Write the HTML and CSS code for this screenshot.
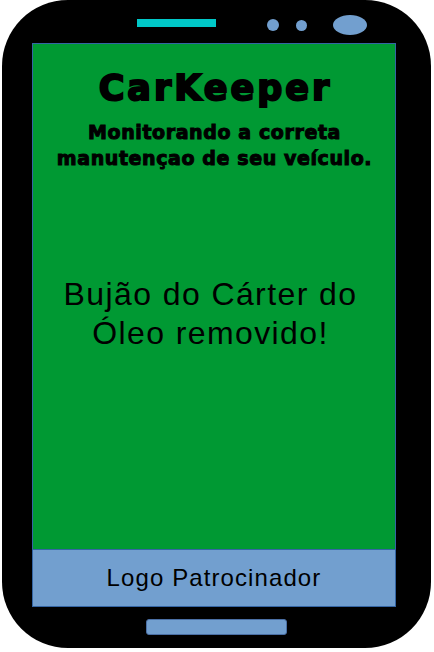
FILE: index.html
```html
<!DOCTYPE html>
<html lang="pt">
<head>
<meta charset="utf-8">
<link rel="stylesheet" href="styles.css">
</head>
<body>
<div class="phone">
  <div class="bezel-top">
    <span class="speaker"></span>
    <span class="dot dot-1"></span>
    <span class="dot dot-2"></span>
    <span class="camera"></span>
  </div>
  <div class="screen">
    <div class="content">
      <h1 class="title">CarKeeper</h1>
      <p class="subtitle">Monitorando a correta<br>manutençao de seu veículo.</p>
      <p class="message">Bujão do Cárter do<br>Óleo removido!</p>
    </div>
    <div class="sponsor">Logo Patrocinador</div>
  </div>
  <div class="bezel-bottom">
    <span class="home"></span>
  </div>
</div>
</body>
</html>
```
FILE: styles.css
```css
html, body {
  margin: 0;
  padding: 0;
  background: #ffffff;
}
body {
  width: 434px;
  height: 652px;
  overflow: hidden;
}
.phone {
  margin-left: 2px;
  width: 429px;
  height: 648px;
  background: #000;
  border-radius: 66px;
  display: flex;
  flex-direction: column;
}
.bezel-top {
  height: 43px;
  display: flex;
  align-items: flex-start;
  padding-left: 135px;
  box-sizing: border-box;
}
.speaker {
  margin-top: 19px;
  width: 79px;
  height: 8px;
  background: #00c8c8;
}
.dot {
  margin-top: 19px;
  border-radius: 50%;
  background: #729fcf;
}
.dot-1 {
  width: 12px;
  height: 12px;
  margin-left: 51px;
}
.dot-2 {
  width: 11px;
  height: 11px;
  margin-left: 17px;
  margin-top: 20px;
}
.camera {
  margin-top: 15px;
  margin-left: 26px;
  width: 34px;
  height: 20px;
  border-radius: 50%;
  background: #729fcf;
}
.screen {
  margin-left: 30px;
  width: 364px;
  height: 564px;
  box-sizing: border-box;
  border: 1px solid #3465a4;
  display: flex;
  flex-direction: column;
}
.content {
  flex: 1;
  background: #009933;
  text-align: center;
  color: #000;
}
.title {
  margin: 24px 0 0;
  padding-left: 3px;
  font-family: "DejaVu Sans", sans-serif;
  font-weight: bold;
  font-size: 35px;
  line-height: 40px;
  letter-spacing: 3px;
  -webkit-text-stroke: 2px #000;
}
.subtitle {
  margin: 11px 0 0;
  padding-left: 1px;
  font-family: "DejaVu Sans", sans-serif;
  font-weight: bold;
  font-size: 19px;
  line-height: 26px;
  letter-spacing: 0.6px;
  -webkit-text-stroke: 1px #000;
}
.message {
  margin: 104px 0 0;
  padding-right: 7px;
  font-family: "Liberation Sans", Arial, sans-serif;
  font-size: 32px;
  line-height: 39px;
  letter-spacing: 1.4px;
}
.sponsor {
  height: 56px;
  border-top: 1px solid #3465a4;
  background: #729fcf;
  font-family: "Liberation Sans", Arial, sans-serif;
  font-size: 24px;
  line-height: 56px;
  letter-spacing: 1.1px;
  text-align: center;
  color: #000;
}
.bezel-bottom {
  display: flex;
  padding-left: 144px;
  padding-top: 12px;
}
.home {
  width: 141px;
  height: 16px;
  box-sizing: border-box;
  border: 1px solid #4a6fa5;
  border-radius: 3px;
  background: #729fcf;
}
```
